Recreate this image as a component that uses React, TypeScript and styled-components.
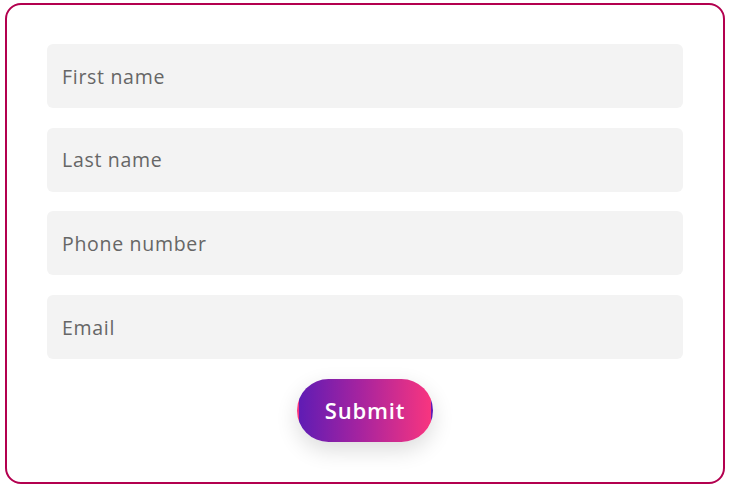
import React from "react";
import styled, { createGlobalStyle } from "styled-components";

const Global = createGlobalStyle`
  html, body { margin: 0; padding: 0; background: #ffffff; }
  body { font-family: "Open Sans", "Liberation Sans", sans-serif; }
`;

const Card = styled.form`
  box-sizing: border-box;
  width: 720px;
  height: 481px;
  margin: 3px 0 0 5px;
  border: 2px solid #b3004f;
  border-radius: 16px;
  padding: 39px 40px 0;
  display: flex;
  flex-direction: column;
  align-items: center;
  gap: 19.7px;
  background: #fff;
`;

const Field = styled.input`
  box-sizing: border-box;
  width: 100%;
  height: 64px;
  border: none;
  outline: none;
  border-radius: 6px;
  background: #f3f3f3;
  padding: 0 15px;
  font-family: "Open Sans", "Liberation Sans", sans-serif;
  font-size: 19.5px;
  letter-spacing: 0.7px;
  color: #555;
  &::placeholder { color: #666; }
`;

const Submit = styled.button`
  box-sizing: border-box;
  width: 136px;
  height: 63px;
  border: 2px solid transparent;
  border-radius: 32px;
  background: linear-gradient(90deg, #5f1cb4 0%, #a423a0 45%, #f8357f 100%);
  color: #fff;
  font-family: "Open Sans", "Liberation Sans", sans-serif;
  font-weight: 600;
  font-size: 22px;
  letter-spacing: 0.8px;
  padding: 0;
  box-shadow: 0 8px 22px rgba(0, 0, 0, 0.14);
  cursor: pointer;
`;

export default function App() {
  return (
    <>
      <Global />
      <Card onSubmit={(e) => e.preventDefault()}>
        <Field placeholder="First name" />
        <Field placeholder="Last name" />
        <Field placeholder="Phone number" />
        <Field placeholder="Email" />
        <Submit type="submit">Submit</Submit>
      </Card>
    </>
  );
}
